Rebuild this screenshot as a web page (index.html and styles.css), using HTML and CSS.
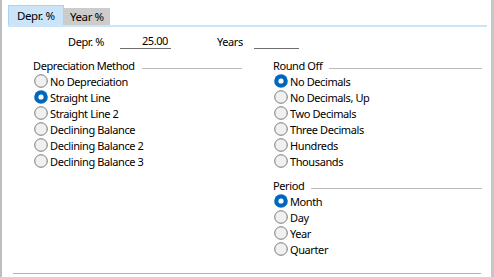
FILE: index.html
```html
<!DOCTYPE html>
<html lang="en">
<head>
    <meta charset="UTF-8">
    <title>Depreciation</title>
    <link rel="stylesheet" href="styles.css">
</head>
<body>
    <div class="window">
        <div class="tabs">
            <div class="tab active">Depr. %</div>
            <div class="tab">Year %</div>
        </div>

        <div class="fields">
            <span class="label label-depr">Depr. %</span>
            <span class="field field-depr">25.00</span>
            <span class="label label-years">Years</span>
            <span class="field field-years"></span>
        </div>

        <div class="columns">
            <div class="group">
                <div class="heading">Depreciation Method</div>
                <div class="radio"><svg viewBox="0 0 14 14"><circle class="off" cx="7" cy="7" r="6.3"/></svg>No Depreciation</div>
                <div class="radio"><svg viewBox="0 0 14 14"><circle class="on" cx="7" cy="7" r="6.8"/><circle class="dot" cx="7" cy="7" r="2.6"/></svg>Straight Line</div>
                <div class="radio"><svg viewBox="0 0 14 14"><circle class="off" cx="7" cy="7" r="6.3"/></svg>Straight Line 2</div>
                <div class="radio"><svg viewBox="0 0 14 14"><circle class="off" cx="7" cy="7" r="6.3"/></svg>Declining Balance</div>
                <div class="radio"><svg viewBox="0 0 14 14"><circle class="off" cx="7" cy="7" r="6.3"/></svg>Declining Balance 2</div>
                <div class="radio"><svg viewBox="0 0 14 14"><circle class="off" cx="7" cy="7" r="6.3"/></svg>Declining Balance 3</div>
            </div>

            <div class="group">
                <div class="heading">Round Off</div>
                <div class="radio"><svg viewBox="0 0 14 14"><circle class="on" cx="7" cy="7" r="6.8"/><circle class="dot" cx="7" cy="7" r="2.6"/></svg>No Decimals</div>
                <div class="radio"><svg viewBox="0 0 14 14"><circle class="off" cx="7" cy="7" r="6.3"/></svg>No Decimals, Up</div>
                <div class="radio"><svg viewBox="0 0 14 14"><circle class="off" cx="7" cy="7" r="6.3"/></svg>Two Decimals</div>
                <div class="radio"><svg viewBox="0 0 14 14"><circle class="off" cx="7" cy="7" r="6.3"/></svg>Three Decimals</div>
                <div class="radio"><svg viewBox="0 0 14 14"><circle class="off" cx="7" cy="7" r="6.3"/></svg>Hundreds</div>
                <div class="radio"><svg viewBox="0 0 14 14"><circle class="off" cx="7" cy="7" r="6.3"/></svg>Thousands</div>

                <div class="heading period">Period</div>
                <div class="radio"><svg viewBox="0 0 14 14"><circle class="on" cx="7" cy="7" r="6.8"/><circle class="dot" cx="7" cy="7" r="2.6"/></svg>Month</div>
                <div class="radio"><svg viewBox="0 0 14 14"><circle class="off" cx="7" cy="7" r="6.3"/></svg>Day</div>
                <div class="radio"><svg viewBox="0 0 14 14"><circle class="off" cx="7" cy="7" r="6.3"/></svg>Year</div>
                <div class="radio"><svg viewBox="0 0 14 14"><circle class="off" cx="7" cy="7" r="6.3"/></svg>Quarter</div>
            </div>
        </div>

        <div class="bottom-line"></div>
    </div>
</body>
</html>
```

FILE: styles.css
```css
body {
    margin: 0;
    font-family: "Noto Sans", "Open Sans", sans-serif;
    font-size: 11px;
    letter-spacing: -0.4px;
    color: #000;
    background-color: #fff;
}
.window {
    width: 494px;
    height: 277px;
    box-sizing: border-box;
    border-left: 2px solid #bdbdbd;
    border-right: 3px solid #c6c6c6;
    overflow: hidden;
}
.tabs {
    display: flex;
    align-items: flex-end;
    margin: 0 4px 0 6px;
    padding-top: 5px;
    border-bottom: 2px solid #cce4f7;
}
.tab {
    box-sizing: border-box;
    height: 17px;
    width: 46px;
    padding-left: 6px;
    line-height: 17px;
    background-color: #cccccc;
    font-size: 11.5px;
}
.tab.active {
    height: 20px;
    width: 56px;
    padding-left: 8px;
    line-height: 19px;
    background-color: #cce4f7;
    border: 1px solid #a9d2f3;
    border-bottom: none;
}
.fields {
    display: flex;
    align-items: center;
    height: 16px;
    margin-top: 6px;
    padding-left: 66px;
}
.label-depr {
    width: 52px;
}
.label-years {
    width: 37px;
    margin-left: 46px;
}
.field {
    box-sizing: border-box;
    height: 15px;
    border-bottom: 1px solid #6e6e6e;
    text-align: right;
    padding-right: 3px;
    line-height: 14px;
}
.field-depr {
    width: 51px;
}
.field-years {
    width: 45px;
}
.columns {
    display: flex;
    align-items: flex-start;
    gap: 31px;
    margin-top: 8px;
    padding-left: 31px;
}
.group {
    width: 209px;
}
.heading {
    display: flex;
    align-items: center;
    height: 16px;
}
.heading::after {
    content: "";
    flex: 1;
    height: 1px;
    margin-top: 6px;
    margin-left: 7px;
    background-color: #bcbcbc;
}
.heading.period {
    margin-top: 8px;
}
.radio {
    display: flex;
    align-items: center;
    height: 16px;
    gap: 2px;
}
.radio svg {
    width: 14px;
    height: 14px;
    margin-left: 1px;
}
.off {
    fill: #f0f0f0;
    stroke: #7a7a7a;
    stroke-width: 1;
}
.on {
    fill: #0067c0;
}
.dot {
    fill: #fff;
}
.bottom-line {
    height: 1px;
    margin: 16px 0 0 11px;
    width: 468px;
    background-color: #b4b4b4;
}
```
